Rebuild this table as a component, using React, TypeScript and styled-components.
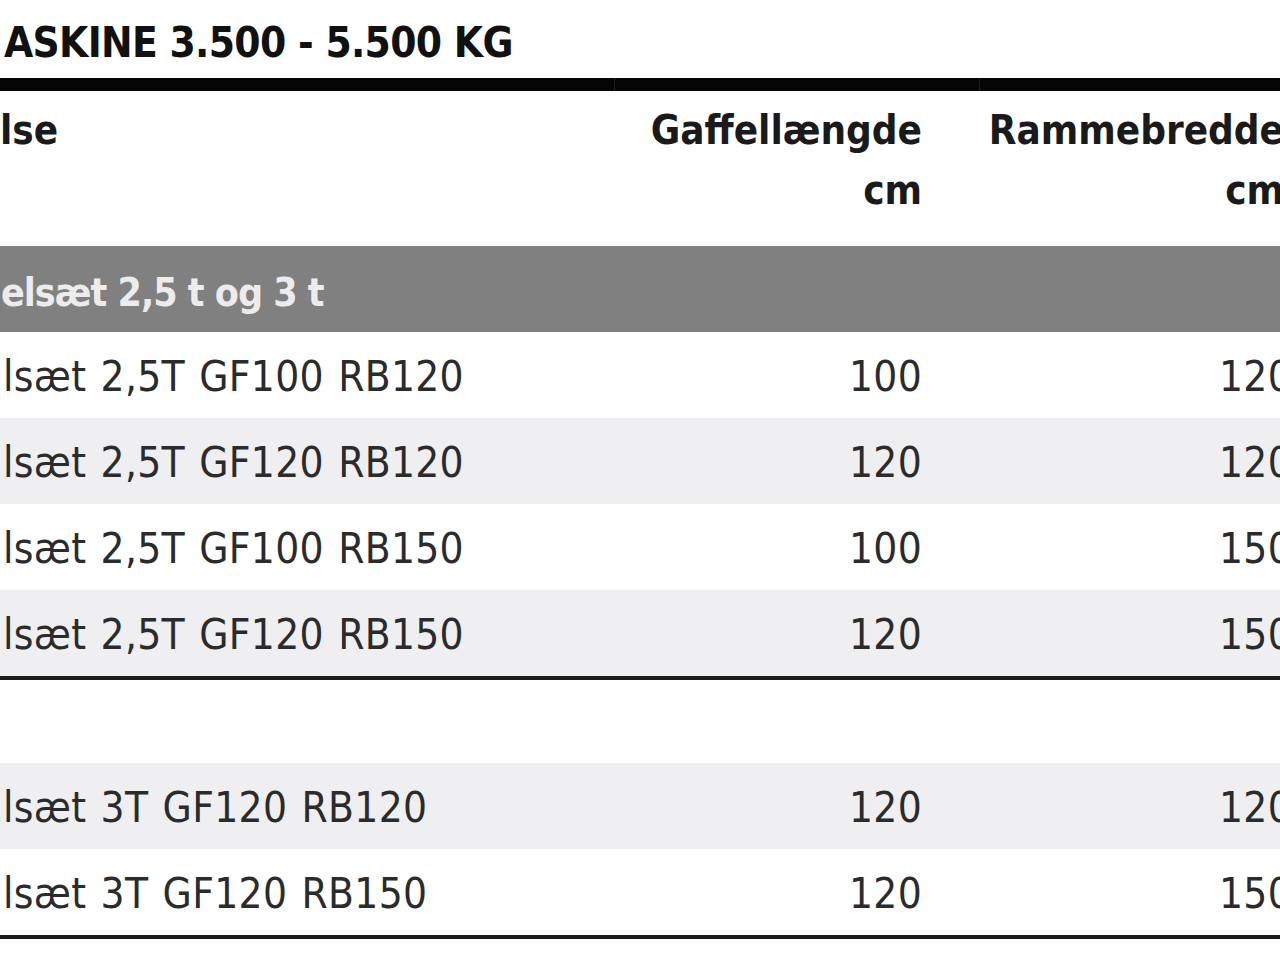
import React from "react";
import styled, { createGlobalStyle } from "styled-components";

const GlobalStyle = createGlobalStyle`
  html, body {
    margin: 0;
    padding: 0;
    background: #ffffff;
  }
  body {
    font-family: "DejaVu Sans Condensed", "Liberation Sans", sans-serif;
    color: #2b2b2b;
    overflow: hidden;
  }
`;

const Page = styled.div`
  width: 1280px;
  height: 960px;
  overflow: hidden;
  background: #ffffff;
`;

const Title = styled.h1`
  margin: 0;
  height: 78px;
  padding: 0 0 0 4px;
  box-sizing: border-box;
  font-size: 42px;
  font-weight: 700;
  letter-spacing: -0.7px;
  line-height: 86px;
  color: #111111;
  white-space: nowrap;
`;

const TopRule = styled.div`
  width: 1350px;
  height: 13px;
  display: grid;
  grid-template-columns: 614px 364px 370px;
  column-gap: 1px;
  background: #1e1e1e;
`;

const RuleSegment = styled.div`
  background: #050505;
`;

const Table = styled.div`
  width: 1350px;
  display: flex;
  flex-direction: column;
`;

const Row = styled.div<{ $tone?: "white" | "light" | "section"; $h?: number; $rule?: boolean }>`
  display: grid;
  grid-template-columns: 615px 365px 370px;
  height: ${(p) => p.$h ?? 86}px;
  box-sizing: content-box;
  background: ${(p) =>
    p.$tone === "light" ? "#efeff1" : p.$tone === "section" ? "#808080" : "#ffffff"};
  color: ${(p) => (p.$tone === "section" ? "#ececec" : "#2b2b2b")};
  border-bottom: ${(p) => (p.$rule ? "4px solid #1c1c1c" : "none")};
`;

const Cell = styled.div<{ $right?: boolean }>`
  display: flex;
  align-items: center;
  justify-content: ${(p) => (p.$right ? "flex-end" : "flex-start")};
  padding: ${(p) => (p.$right ? "3px 58px 0 0" : "3px 0 0 3px")};
  font-size: 42px;
  font-weight: 400;
  letter-spacing: 0.3px;
  word-spacing: 2px;
  white-space: nowrap;
`;

const SectionCell = styled.div`
  display: flex;
  align-items: center;
  padding: 6px 0 0 1px;
  font-size: 39px;
  font-weight: 700;
  letter-spacing: -1px;
  white-space: nowrap;
`;

const HeadCell = styled.div<{ $right?: boolean; $pr?: number }>`
  padding: ${(p) => (p.$right ? `9px ${p.$pr ?? 58}px 0 0` : "9px 0 0 0")};
  text-align: ${(p) => (p.$right ? "right" : "left")};
  font-size: 40px;
  font-weight: 700;
  line-height: 60px;
  color: #1a1a1a;
  white-space: nowrap;
`;

type Item = { name: string; gf: string; rb: string };

const firstGroup: Item[] = [
  { name: "lsæt 2,5T GF100 RB120", gf: "100", rb: "120" },
  { name: "lsæt 2,5T GF120 RB120", gf: "120", rb: "120" },
  { name: "lsæt 2,5T GF100 RB150", gf: "100", rb: "150" },
  { name: "lsæt 2,5T GF120 RB150", gf: "120", rb: "150" },
];

const secondGroup: Item[] = [
  { name: "lsæt 3T GF120 RB120", gf: "120", rb: "120" },
  { name: "lsæt 3T GF120 RB150", gf: "120", rb: "150" },
];

const App = () => {
  return (
    <Page>
      <GlobalStyle />
      <Title>ASKINE 3.500 - 5.500 KG</Title>
      <TopRule>
        <RuleSegment />
        <RuleSegment />
        <RuleSegment />
      </TopRule>
      <Table>
        <Row $h={155}>
          <HeadCell>lse</HeadCell>
          <HeadCell $right>
            Gaffellængde
            <br />
            cm
          </HeadCell>
          <HeadCell $right $pr={66}>
            Rammebredde
            <br />
            cm
          </HeadCell>
        </Row>
        <Row $tone="section">
          <SectionCell>elsæt 2,5 t og 3 t</SectionCell>
          <Cell />
          <Cell />
        </Row>
        {firstGroup.map((it, i) => (
          <Row key={it.name} $tone={i % 2 ? "light" : "white"} $rule={i === firstGroup.length - 1}>
            <Cell>{it.name}</Cell>
            <Cell $right>{it.gf}</Cell>
            <Cell $right>{it.rb}</Cell>
          </Row>
        ))}
        <Row $h={83}>
          <Cell />
          <Cell />
          <Cell />
        </Row>
        {secondGroup.map((it, i) => (
          <Row key={it.name} $tone={i % 2 ? "white" : "light"} $rule={i === secondGroup.length - 1}>
            <Cell>{it.name}</Cell>
            <Cell $right>{it.gf}</Cell>
            <Cell $right>{it.rb}</Cell>
          </Row>
        ))}
      </Table>
    </Page>
  );
};

export default App;
